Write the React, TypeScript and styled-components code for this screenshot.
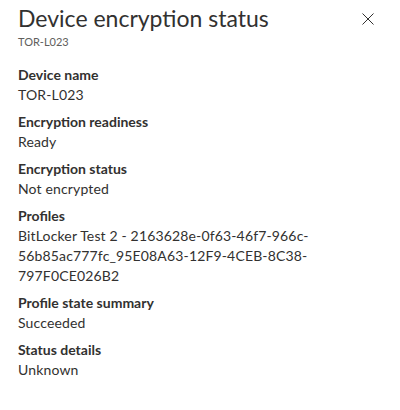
import React from "react";
import styled, { createGlobalStyle } from "styled-components";

const GlobalStyle = createGlobalStyle`
  body {
    margin: 0;
    background: #ffffff;
    font-family: Lato, "Open Sans", sans-serif;
    color: #323130;
  }
`;

const Panel = styled.section`
  width: 400px;
  height: 410px;
  box-sizing: border-box;
  padding: 2px 16px 0 18px;
  background: #ffffff;
`;
const Header = styled.header`
  display: flex;
  justify-content: space-between;
  align-items: flex-start;
`;
const TitleBlock = styled.div`
  display: flex;
  flex-direction: column;
`;
const Title = styled.h1`
  margin: 0;
  font-size: 23px;
  font-weight: 400;
  line-height: 32px;
  color: #323130;
`;
const Subtitle = styled.div`
  font-size: 11px;
  line-height: 16px;
  color: #605e5c;
`;
const CloseButton = styled.button`
  width: 32px;
  height: 32px;
  margin-top: 1px;
  padding: 0;
  border: none;
  background: transparent;
  display: flex;
  align-items: center;
  justify-content: center;
  color: #323130;
  cursor: pointer;
`;
const FieldList = styled.dl`
  margin: 15px 0 0;
  padding-right: 2px;
  display: flex;
  flex-direction: column;
  gap: 7px;
`;
const Field = styled.div`
  display: flex;
  flex-direction: column;
`;
const Label = styled.dt`
  font-size: 14px;
  line-height: 20px;
  font-weight: 700;
  color: #323130;
`;
const Value = styled.dd`
  margin: 0;
  font-size: 14px;
  line-height: 20px;
  letter-spacing: 0.15px;
  color: #323130;
`;

// ---- STYLE END ----

const fields = [
  { label: "Device name", value: "TOR-L023" },
  { label: "Encryption readiness", value: "Ready" },
  { label: "Encryption status", value: "Not encrypted" },
  {
    label: "Profiles",
    value:
      "BitLocker Test 2 - 2163628e-0f63-46f7-966c-56b85ac777fc_95E08A63-12F9-4CEB-8C38-797F0CE026B2",
  },
  { label: "Profile state summary", value: "Succeeded" },
  { label: "Status details", value: "Unknown" },
];

function CloseIcon() {
  return (
    <svg width="12" height="12" viewBox="0 0 12 12" aria-hidden="true">
      <path d="M0.5 0.5 L11.5 11.5 M11.5 0.5 L0.5 11.5" stroke="currentColor" strokeWidth="1" fill="none" />
    </svg>
  );
}

export default function App() {
  return (
    <Panel>
      <GlobalStyle />
      <Header>
        <TitleBlock>
          <Title>Device encryption status</Title>
          <Subtitle>TOR-L023</Subtitle>
        </TitleBlock>
        <CloseButton aria-label="Close">
          <CloseIcon />
        </CloseButton>
      </Header>
      <FieldList>
        {fields.map((f) => (
          <Field key={f.label}>
            <Label>{f.label}</Label>
            <Value>{f.value}</Value>
          </Field>
        ))}
      </FieldList>
    </Panel>
  );
}
